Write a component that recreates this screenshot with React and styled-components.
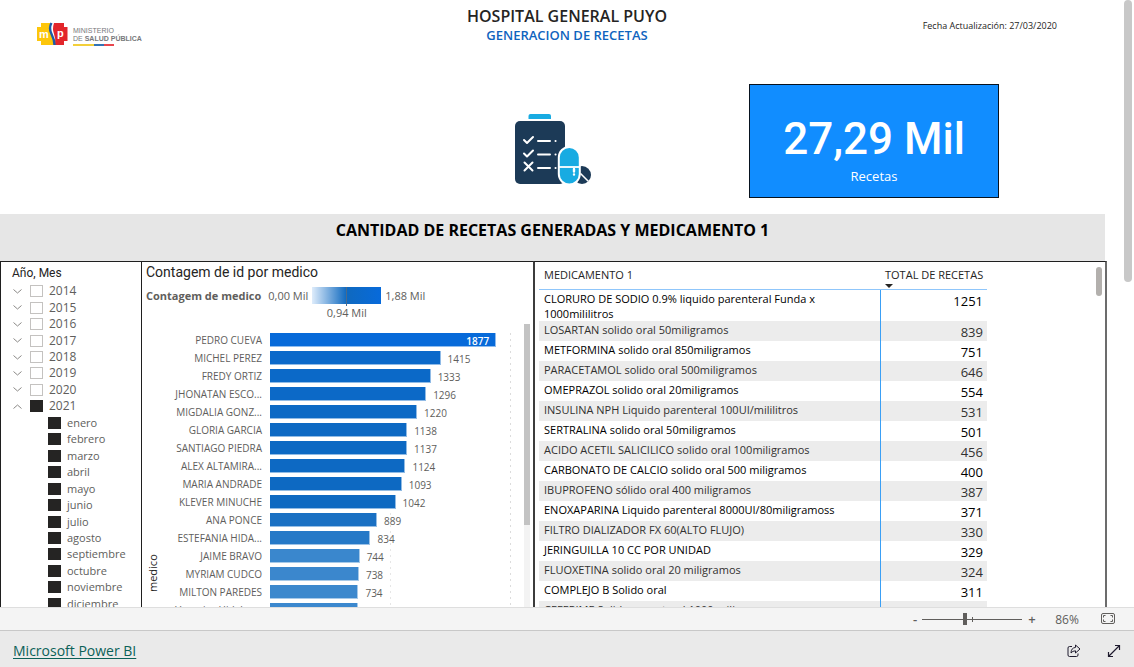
import React from "react";
import styled, { createGlobalStyle } from "styled-components";

const ui = `"Open Sans", "Noto Sans", sans-serif`;
const din = `Roboto, "Open Sans", sans-serif`;

const Global = createGlobalStyle`
  * { box-sizing: border-box; }
  body { margin: 0; font-family: ${ui}; background: #fff; color: #252423; }
  button { font: inherit; border: 0; background: none; padding: 0; cursor: pointer; color: inherit; }
`;

const Viewer = styled.div`
  display: flex;
  flex-direction: column;
  height: 100vh;
  overflow: hidden;
`;

const Stage = styled.main`
  flex: 1;
  min-height: 0;
  display: flex;
  overflow: hidden;
`;

const Report = styled.div`
  flex: 1;
  min-width: 0;
  display: flex;
  flex-direction: column;
`;

const PageGutter = styled.div`
  width: 27px;
  padding-left: 17px;
`;

const PageThumb = styled.div`
  width: 8px;
  height: 282px;
  background: #c8c8c8;
  border-radius: 4px;
`;

const Header = styled.header`
  display: grid;
  grid-template-columns: 449fr 236fr 422fr;
  grid-template-rows: 84px 130px;
  flex: none;
`;

const LogoCell = styled.div`
  padding: 22px 0 0 37px;
  display: flex;
  gap: 5px;
  align-items: flex-start;
`;

const LogoText = styled.div`
  font-family: "Liberation Sans", sans-serif;
  font-size: 7px;
  line-height: 8px;
  color: #77787b;
  padding-top: 5px;
  white-space: nowrap;
`;

const Flag = styled.div`
  width: 41px;
  height: 2px;
  margin-top: 1px;
  background: linear-gradient(90deg, #f3cf3a 0 50%, #3273b5 50% 75%, #e8474e 75%);
`;

const Titles = styled.div`
  padding-top: 6px;
  text-align: center;
  white-space: nowrap;
`;

const Title = styled.h1`
  margin: 0;
  font-size: 16px;
  line-height: 20px;
  font-weight: 600;
`;

const Subtitle = styled.h2`
  margin: 0;
  font-size: 13px;
  line-height: 18px;
  font-weight: 600;
  color: #0f64be;
`;

const Updated = styled.p`
  margin: 0;
  padding: 18px 50px 0 0;
  font-size: 9px;
  line-height: 16px;
  text-align: right;
`;

const IconCell = styled.div`
  grid-column: 2;
  padding: 28px 0 0 65px;
`;

const Card = styled.section`
  width: 250px;
  height: 114px;
  margin-left: 64px;
  border: 1px solid #08131f;
  background: #118dff;
  color: #fff;
  text-align: center;
  display: flex;
  flex-direction: column;
  padding-top: 27px;
`;

const CardValue = styled.div`
  font-family: ${din};
  font-weight: 500;
  font-size: 44px;
  line-height: 54px;
`;

const CardLabel = styled.div`
  font-size: 13px;
  line-height: 20px;
`;

const Banner = styled.h2`
  flex: none;
  margin: 0 2px 0 0;
  height: 47px;
  padding-top: 6px;
  background: #e6e6e6;
  color: #000;
  font-size: 16px;
  line-height: 20px;
  text-align: center;
`;

const Panels = styled.div`
  flex: 1;
  min-height: 0;
  display: grid;
  grid-template-columns: 141fr 392fr 574fr;
`;

const Panel = styled.section`
  position: relative;
  min-width: 0;
  overflow: hidden;
  border: solid #1f1f1f;
  border-width: 1px 0 0 1px;
`;

const ChartPanel = styled(Panel)`
  display: flex;
  flex-direction: column;
`;

const TablePanel = styled(Panel)`
  display: flex;
  justify-content: space-between;
  border-left: 2px solid #3c3c3c;
  border-right: 2px solid #6c6c6c;
`;

const SlicerTitle = styled.h3`
  margin: 0;
  padding: 3px 0 0 11px;
  font-family: ${din};
  font-size: 12px;
  line-height: 16px;
  font-weight: 400;
`;

const Tree = styled.div`
  display: grid;
  grid-auto-rows: 1fr;
  height: 329px;
  margin-top: 2px;
`;

const TreeRow = styled.div`
  display: flex;
  align-items: center;
  gap: 6px;
  padding-left: ${(p) => (p.$child ? 47 : 12)}px;
  font-size: ${(p) => (p.$child ? 11 : 12)}px;
  line-height: 16px;
  color: #605e5c;
`;

const Toggle = styled.button`
  width: 11px;
  height: 12px;
  display: flex;
  align-items: center;
  svg { transform: ${(p) => (p.$open ? "rotate(180deg)" : "none")}; }
`;

const Tick = styled.input`
  appearance: none;
  margin: 0;
  width: 13px;
  height: 12px;
  flex: none;
  border: 1px solid #c4c2c0;
  background: #fff;
  &:checked { background: #252423; border-color: #252423; }
`;

const ChartTitle = styled.h3`
  margin: 0;
  padding-left: 4px;
  font-family: ${din};
  font-size: 14px;
  line-height: 20px;
  font-weight: 400;
`;

const Legend = styled.div`
  display: flex;
  align-items: flex-start;
  gap: 4px;
  padding: 5px 0 0 4px;
  height: 42px;
  font-size: 11px;
  line-height: 18px;
  color: #605e5c;
  white-space: nowrap;
  b { margin-right: 3px; }
`;

const Scale = styled.div`
  width: 69px;
  display: flex;
  flex-direction: column;
  align-items: center;
`;

const Ramp = styled.div`
  width: 100%;
  height: 17px;
  background: linear-gradient(90deg, #deecfb, #0f69bf 50%, #076adb);
  display: flex;
  justify-content: center;
  &::after { content: ""; width: 1px; height: 19px; background: #4a6b8c; }
`;

const Plot = styled.div`
  flex: 1;
  min-height: 0;
  display: flex;
  overflow: hidden;
`;

const AxisName = styled.div`
  width: 22px;
  flex: none;
  writing-mode: vertical-rl;
  transform: rotate(180deg);
  font-size: 11px;
  line-height: 22px;
  padding-bottom: 230px;
  text-align: right;
  color: #252423;
  height: 272px;
`;

const Bars = styled.div`
  flex: 1;
  min-width: 0;
  height: 300px;
  padding-top: 9px;
`;

const BarRow = styled.div`
  display: flex;
  height: 18px;
`;

const BarName = styled.div`
  width: 106px;
  flex: none;
  padding-right: 8px;
  text-align: right;
  font-size: 10px;
  line-height: 14px;
  color: #605e5c;
  white-space: nowrap;
`;

const Track = styled.div`
  flex: 1;
  display: flex;
  background: repeating-linear-gradient(#e6e6e6 0 2px, transparent 2px 6px) 50% 0 / 1px 100% no-repeat,
    repeating-linear-gradient(#dcdcdc 0 2px, transparent 2px 6px) 100% 0 / 1px 100% no-repeat;
`;

const Bar = styled.div`
  flex: none;
  height: 14px;
  border: solid rgba(255, 255, 255, 0.55);
  border-width: 0 1px 1px 0;
  color: #fff;
  font-size: 10px;
  line-height: 17px;
  font-weight: 600;
  text-align: right;
  padding-right: 6px;
`;

const BarValue = styled.div`
  padding-left: 7px;
  font-size: 10px;
  line-height: 16px;
  color: #605e5c;
`;

const ChartGutter = styled.div`
  width: 22px;
  flex: none;
  padding-left: 13px;
`;

const ChartTrack = styled.div`
  width: 6px;
  height: 100%;
  background: #f3f3f3;
`;

const ChartThumb = styled.div`
  height: 201px;
  background: #c3c3c3;
`;

const Data = styled.table`
  border-collapse: separate;
  border-spacing: 0;
  table-layout: fixed;
  width: 448px;
  margin: 0 0 0 4px;
  flex: none;
  align-self: flex-start;
  color: #000;
`;

const Th = styled.th`
  height: 28px;
  padding: ${(p) => (p.$num ? "4px 0 0 4px" : "4px 5px 0")};
  text-align: left;
  vertical-align: top;
  font-size: 11px;
  line-height: 18px;
  font-weight: 400;
  color: #252423;
  border-bottom: 1px solid #8fc6fb;
  white-space: nowrap;
`;

const SortMark = styled.svg`
  display: block;
`;

const Row = styled.tr`
  height: 20px;
  background: ${(p) => (p.$alt ? "#ececec" : "#fff")};
  color: ${(p) => (p.$alt ? "#323130" : "#000")};
`;

const NameCell = styled.td`
  padding: 1px 40px 0 5px;
  vertical-align: top;
  font-size: 11px;
  line-height: 15px;
  white-space: ${(p) => (p.$wrap ? "normal" : "nowrap")};
  border-right: 1px solid #3a9ff5;
`;

const CountCell = styled.td`
  padding: 2px 4px 0 0;
  vertical-align: top;
  text-align: right;
  font-size: 13px;
  line-height: 18px;
`;

const TableThumb = styled.div`
  width: 6px;
  height: 29px;
  margin: 5px 3px 0 0;
  border-radius: 3px;
  background: #b3b0ad;
`;

const ZoomBar = styled.div`
  flex: none;
  height: 24px;
  background: #f4f4f4;
  border-top: 1px solid #dedede;
  border-bottom: 1px solid #c8c8c8;
  display: flex;
  justify-content: flex-end;
  align-items: center;
  padding-right: 19px;
  color: #605e5c;
  font-size: 12px;
`;

const ZoomButton = styled.button`
  width: 14px;
  height: 20px;
  && { font-size: 13px; font-weight: 600; line-height: 18px; }
  text-align: center;
`;

const Slider = styled.input`
  appearance: none;
  width: 100px;
  height: 12px;
  margin: 0 3px 0 0;
  background: linear-gradient(#605e5c 0 0) 0 6px / 100% 1px no-repeat,
    linear-gradient(#605e5c 0 0) 50px 50% / 1px 5px no-repeat;
  &::-webkit-slider-thumb {
    appearance: none;
    width: 4px;
    height: 12px;
    background: #605e5c;
  }
`;

const ZoomLevel = styled.output`
  width: 40px;
  text-align: center;
  margin: 0 14px 0 8px;
  font-size: 12px;
`;

const Footer = styled.footer`
  flex: none;
  height: 36px;
  background: #eaeaea;
  display: flex;
  align-items: center;
  justify-content: space-between;
  padding: 3px 13px 0;
`;

const Brand = styled.a`
  color: #0b6158;
  font-size: 14px;
  line-height: 20px;
  text-decoration: underline;
  text-underline-offset: 2px;
`;

const Actions = styled.div`
  display: flex;
  gap: 26px;
  button { display: flex; }
`;

const years = ["2014", "2015", "2016", "2017", "2018", "2019", "2020", "2021"];
const months = ["enero", "febrero", "marzo", "abril", "mayo", "junio", "julio", "agosto", "septiembre", "octubre", "noviembre", "diciembre"];

const doctors = [
  ["PEDRO CUEVA", 1877, "#076ad9"],
  ["MICHEL PEREZ", 1415, "#0b69ca"],
  ["FREDY ORTIZ", 1333, "#0b69c8"],
  ["JHONATAN ESCO...", 1296, "#0c69c7"],
  ["MIGDALIA GONZ...", 1220, "#0c69c5"],
  ["GLORIA GARCIA", 1138, "#0d69c3"],
  ["SANTIAGO PIEDRA", 1137, "#0d69c3"],
  ["ALEX ALTAMIRA...", 1124, "#0d69c3"],
  ["MARIA ANDRADE", 1093, "#0d69c2"],
  ["KLEVER MINUCHE", 1042, "#0e69c1"],
  ["ANA PONCE", 889, "#1a70c3"],
  ["ESTEFANIA HIDA...", 834, "#2679c7"],
  ["JAIME BRAVO", 744, "#3a87cd"],
  ["MYRIAM CUDCO", 738, "#3b87cd"],
  ["MILTON PAREDES", 734, "#3c88cd"],
  ["Veronica Hidalgo...", 731, "#3c88ce"],
];

const medicines = [
  ["CLORURO DE SODIO 0.9% liquido parenteral Funda x 1000mililitros", 1251],
  ["LOSARTAN solido oral 50miligramos", 839],
  ["METFORMINA solido oral 850miligramos", 751],
  ["PARACETAMOL solido oral 500miligramos", 646],
  ["OMEPRAZOL solido oral 20miligramos", 554],
  ["INSULINA NPH Liquido parenteral 100UI/mililitros", 531],
  ["SERTRALINA solido oral 50miligramos", 501],
  ["ACIDO ACETIL SALICILICO solido oral 100miligramos", 456],
  ["CARBONATO DE CALCIO solido oral 500 miligramos", 400],
  ["IBUPROFENO sólido oral 400 miligramos", 387],
  ["ENOXAPARINA Liquido parenteral 8000UI/80miligramoss", 371],
  ["FILTRO DIALIZADOR FX 60(ALTO FLUJO)", 330],
  ["JERINGUILLA 10 CC POR UNIDAD", 329],
  ["FLUOXETINA solido oral 20 miligramos", 324],
  ["COMPLEJO B Solido oral", 311],
  ["CEFEPIME Solido parenteral 1000 mili...", 300],
];

function Emblem() {
  return (
    <svg width="31" height="24" viewBox="0 0 31 24" role="img" aria-label="msp">
      <path d="M4 1h10q-3 5 0 11t3 11H4v-4H0V5h4z" fill="#fdc60b" />
      <path d="M17 1h10v4h3.500v14H27v4H18q1-6-1-11t0-11z" fill="#e2262b" />
      <path d="M14.500 1q-3 5 0 11t3 11" fill="none" stroke="#1c5ca8" strokeWidth="2.400" />
      <text x="2" y="16" fontFamily="Liberation Sans, sans-serif" fontWeight="700" fontSize="11" fill="#fff">m</text>
      <text x="20" y="15" fontFamily="Liberation Sans, sans-serif" fontWeight="700" fontSize="11" fill="#fff">p</text>
    </svg>
  );
}

function Prescription() {
  return (
    <svg width="78" height="72" viewBox="0 0 78 72" role="img" aria-label="Recetas">
      <path d="M14.500 7V4q0-2 2-2h18.500q2 0 2 2v3z" fill="#18abe2" />
      <rect x="1" y="9" width="50" height="63" rx="5" fill="#1c3a57" />
      <g fill="none" stroke="#fff" strokeWidth="2" strokeLinecap="round" strokeLinejoin="round">
        <path d="M10 28l3 3 6-6M10 41.500l3 3 6-6M10.500 50.500l8 8M18.500 50.500l-8 8" />
        <path d="M24 29h12M24 42.500h12M24 56h12M41.500 29h.1M41.500 42.500h.1M41.500 56h.1" />
      </g>
      <circle cx="68" cy="63" r="9" fill="#1c3a57" />
      <path d="M66.500 61.500l8 8" stroke="#fff" strokeWidth="1.600" />
      <rect x="44.800" y="35" width="21" height="37.500" rx="10.500" fill="#18abe2" stroke="#fff" strokeWidth="2" />
      <path d="M45 55h21" stroke="#fff" strokeWidth="1.800" />
      <path d="M60 57v2.500M60 62.500v.1" stroke="#fff" strokeWidth="2.400" strokeLinecap="round" />
    </svg>
  );
}

function Slicer() {
  return (
    <Panel>
      <SlicerTitle>Año, Mes</SlicerTitle>
      <Tree>
        {years.map((y) => (
          <TreeRow key={y}>
            <Toggle $open={y === "2021"} aria-label={`Desplegar ${y}`}>
              <svg width="9" height="5" viewBox="0 0 9 5" fill="none" stroke="#8a8886">
                <path d="M.5.5l4 3.500 4-3.500" />
              </svg>
            </Toggle>
            <Tick type="checkbox" id={`y${y}`} defaultChecked={y === "2021"} />
            <label htmlFor={`y${y}`}>{y}</label>
          </TreeRow>
        ))}
        {months.map((m) => (
          <TreeRow key={m} $child>
            <Tick type="checkbox" id={m} defaultChecked />
            <label htmlFor={m}>{m}</label>
          </TreeRow>
        ))}
      </Tree>
    </Panel>
  );
}

function DoctorChart() {
  return (
    <ChartPanel>
      <ChartTitle>Contagem de id por medico</ChartTitle>
      <Legend>
        <b>Contagem de medico</b>
        <span>0,00 Mil</span>
        <Scale>
          <Ramp />
          <span>0,94 Mil</span>
        </Scale>
        <span>1,88 Mil</span>
      </Legend>
      <Plot>
        <AxisName>medico</AxisName>
        <Bars>
          {doctors.map(([name, value, color]) => (
            <BarRow key={name}>
              <BarName>{name}</BarName>
              <Track>
                <Bar style={{ width: `${value / 20}%`, backgroundColor: color }}>{value > 1800 ? value : null}</Bar>
                {value > 1800 ? null : <BarValue>{value}</BarValue>}
              </Track>
            </BarRow>
          ))}
        </Bars>
        <ChartGutter>
          <ChartTrack>
            <ChartThumb />
          </ChartTrack>
        </ChartGutter>
      </Plot>
    </ChartPanel>
  );
}

function MedicineTable() {
  return (
    <TablePanel>
      <Data>
        <colgroup>
          <col />
          <col width="106" />
        </colgroup>
        <thead>
          <tr>
            <Th>MEDICAMENTO 1</Th>
            <Th $num>
              TOTAL DE RECETAS
              <SortMark width="8" height="4" viewBox="0 0 8 4">
                <path d="M0 0h8L4 4z" fill="#252423" />
              </SortMark>
            </Th>
          </tr>
        </thead>
        <tbody>
          {medicines.map(([name, total], i) => (
            <Row key={name} $alt={i % 2 === 1}>
              <NameCell $wrap={i === 0}>{name}</NameCell>
              <CountCell>{total}</CountCell>
            </Row>
          ))}
        </tbody>
      </Data>
      <TableThumb />
    </TablePanel>
  );
}

export default function App() {
  return (
    <Viewer>
      <Global />
      <Stage>
        <Report>
          <Header>
            <LogoCell>
              <Emblem />
              <LogoText>
                MINISTERIO
                <br />
                DE <b>SALUD PÚBLICA</b>
                <Flag />
              </LogoText>
            </LogoCell>
            <Titles>
              <Title>HOSPITAL GENERAL PUYO</Title>
              <Subtitle>GENERACION DE RECETAS</Subtitle>
            </Titles>
            <Updated>Fecha Actualización: 27/03/2020</Updated>
            <IconCell>
              <Prescription />
            </IconCell>
            <Card>
              <CardValue>27,29 Mil</CardValue>
              <CardLabel>Recetas</CardLabel>
            </Card>
          </Header>
          <Banner>CANTIDAD DE RECETAS GENERADAS Y MEDICAMENTO 1</Banner>
          <Panels>
            <Slicer />
            <DoctorChart />
            <MedicineTable />
          </Panels>
        </Report>
        <PageGutter>
          <PageThumb />
        </PageGutter>
      </Stage>
      <ZoomBar>
        <ZoomButton aria-label="Alejar">-</ZoomButton>
        <Slider type="range" min="0" max="200" defaultValue="86" aria-label="Zoom" />
        <ZoomButton aria-label="Acercar">+</ZoomButton>
        <ZoomLevel>86%</ZoomLevel>
        <button aria-label="Ajustar a la página">
          <svg width="14" height="11" viewBox="0 0 14 11" fill="none" stroke="#605e5c">
            <rect x=".5" y=".5" width="13" height="10" rx="1.500" />
            <path d="M4.500 2.500h-2v2M9.500 2.500h2v2M4.500 8.500h-2v-2M9.500 8.500h2v-2" />
          </svg>
        </button>
      </ZoomBar>
      <Footer>
        <Brand href="#powerbi">Microsoft Power BI</Brand>
        <Actions>
          <button aria-label="Compartir">
            <svg width="14" height="14" viewBox="0 0 14 14" fill="none" stroke="#1f1b2e" strokeLinejoin="round">
              <path d="M5 2.500H2.500q-1.500 0-1.500 1.500v7q0 1.500 1.500 1.500h7q1.500 0 1.500-1.500V9.500" />
              <path d="M8.500 1l4.500 4-4.500 4V6.800q-3 0-4.500 2.200 0-5 4.500-5.600z" />
            </svg>
          </button>
          <button aria-label="Pantalla completa">
            <svg width="14" height="14" viewBox="0 0 14 14" fill="none" stroke="#1f1b2e" strokeWidth="1.200">
              <path d="M1.500 12.500l11-11M8 1.500h4.500V6M1.500 8v4.500H6" />
            </svg>
          </button>
        </Actions>
      </Footer>
    </Viewer>
  );
}
